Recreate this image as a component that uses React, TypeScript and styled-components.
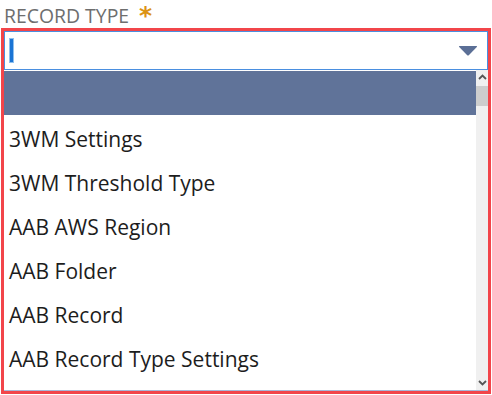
import React from "react";
import styled, { createGlobalStyle } from "styled-components";

const Global = createGlobalStyle`
  html, body { margin: 0; padding: 0; background: #ffffff; }
  body { font-family: "Open Sans", "Noto Sans", sans-serif; }
`;

const Page = styled.div`
  width: 492px;
  height: 395px;
  overflow: hidden;
`;

const Label = styled.div`
  height: 28px;
  box-sizing: border-box;
  padding-left: 4px;
  display: flex;
  align-items: flex-start;
  white-space: nowrap;
`;

const LabelText = styled.span`
  padding-top: 3px;
  font-size: 19.4px;
  line-height: 25px;
  color: #6e6e6e;
`;

const Star = styled.span`
  color: #dc9314;
  font-family: "DejaVu Sans", sans-serif;
  font-size: 25px;
  line-height: 1;
  font-weight: 700;
  margin: 3px 0 0 10px;
`;

const Frame = styled.div`
  margin-left: 1px;
  width: 490px;
  height: 366px;
  box-sizing: border-box;
  border: 3px solid #f2454a;
  display: flex;
  flex-direction: column;
`;

const Input = styled.div`
  height: 39px;
  box-sizing: border-box;
  border: 1px solid #4a8fe0;
  display: flex;
  align-items: center;
  justify-content: space-between;
  padding: 0 9px 0 4px;
  flex: none;
`;

const Caret = styled.span`
  width: 5px;
  height: 25px;
  background: #1b74d4;
  border: 1px solid #8fc0ee;
  box-sizing: border-box;
`;

const ListArea = styled.div`
  flex: 1;
  display: flex;
  min-height: 0;
  border-bottom: 1px solid #a8b8d8;
`;

const List = styled.div`
  flex: 1;
  overflow: hidden;
  padding-top: 1px;
`;

const Row = styled.div<{ $selected?: boolean }>`
  height: 44px;
  box-sizing: border-box;
  padding: 4px 0 0 5px;
  display: flex;
  align-items: center;
  font-size: 21px;
  color: #1d1d1d;
  background: ${(p) => (p.$selected ? "#607399" : "transparent")};
  white-space: nowrap;
`;

const Scrollbar = styled.div`
  width: 12px;
  background: #f0f0f0;
  display: flex;
  flex-direction: column;
  align-items: center;
`;

const ArrowBox = styled.div`
  height: 14px;
  width: 12px;
  display: flex;
  align-items: center;
  justify-content: center;
  flex: none;
`;

const Thumb = styled.div`
  width: 12px;
  height: 20px;
  background: #cdcdcd;
  margin-top: 2px;
`;

const Spacer = styled.div`
  flex: 1;
`;

const items = [
  "",
  "3WM Settings",
  "3WM Threshold Type",
  "AAB AWS Region",
  "AAB Folder",
  "AAB Record",
  "AAB Record Type Settings",
];

export default function App() {
  return (
    <Page>
      <Global />
      <Label>
        <LabelText>RECORD TYPE</LabelText>
        <Star>*</Star>
      </Label>
      <Frame>
        <Input>
          <Caret />
          <svg width="20" height="11" viewBox="0 0 20 11">
            <path d="M1.5 1 H18.5 Q19.5 1 18.8 2 L11 10 Q10 11 9 10 L1.2 2 Q0.5 1 1.5 1 Z" fill="#5b6f96" />
          </svg>
        </Input>
        <ListArea>
          <List>
            {items.map((t, i) => (
              <Row key={i} $selected={i === 0}>
                {t}
              </Row>
            ))}
          </List>
          <Scrollbar>
            <ArrowBox>
              <svg width="9" height="6" viewBox="0 0 9 6">
                <path d="M1 5 L4.5 1.5 L8 5" stroke="#555" strokeWidth="1.8" fill="none" />
              </svg>
            </ArrowBox>
            <Thumb />
            <Spacer />
            <ArrowBox>
              <svg width="9" height="6" viewBox="0 0 9 6">
                <path d="M1 1 L4.5 4.5 L8 1" stroke="#555" strokeWidth="1.8" fill="none" />
              </svg>
            </ArrowBox>
          </Scrollbar>
        </ListArea>
      </Frame>
    </Page>
  );
}
